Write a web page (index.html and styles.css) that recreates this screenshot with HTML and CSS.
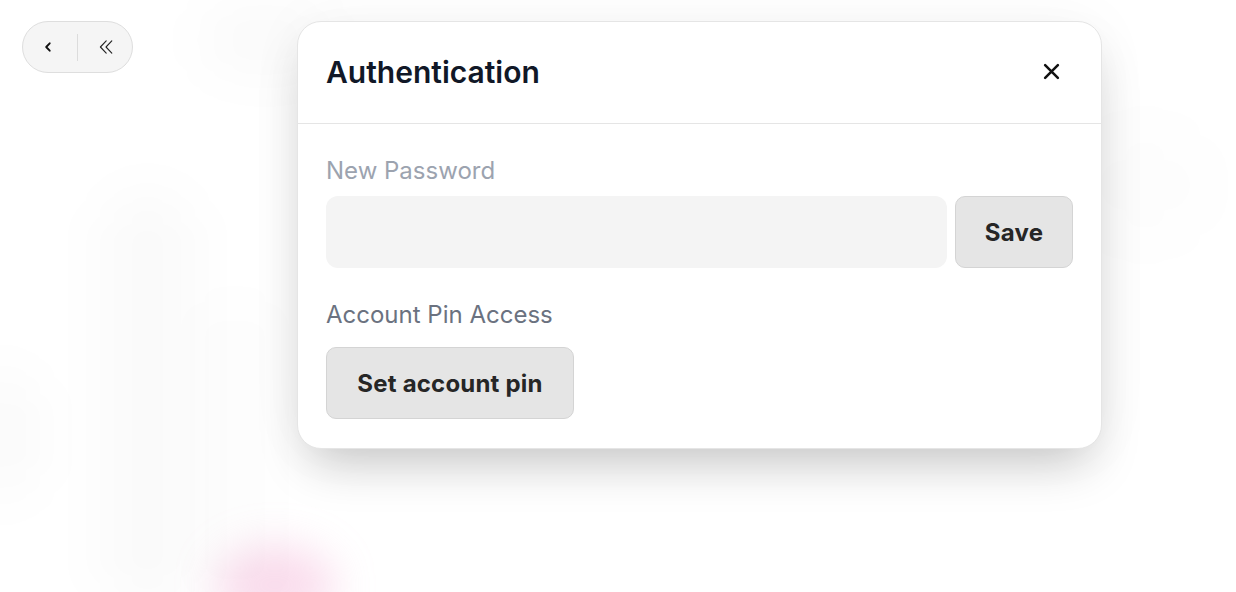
FILE: index.html
```html
<!DOCTYPE html>
<html lang="en">
<head>
<meta charset="utf-8">
<title>Authentication</title>
<link rel="stylesheet" href="styles.css">
</head>
<body>
<div class="backdrop" aria-hidden="true">
  <div class="blob blob-a"></div>
  <div class="blob blob-b"></div>
  <div class="blob blob-c"></div>
  <div class="blob blob-d"></div>
  <div class="blob blob-e"></div>
  <div class="blob blob-pink"></div>
</div>
<div class="page">
  <nav class="pill">
    <button class="pill-btn pill-left" aria-label="Back">
      <svg width="12" height="12" viewBox="0 0 12 12"><path d="M7.7 2.3 4.2 6l3.5 3.7" fill="none" stroke="#111" stroke-width="1.9" stroke-linecap="round" stroke-linejoin="round"/></svg>
    </button>
    <span class="pill-sep"></span>
    <button class="pill-btn pill-right" aria-label="Collapse">
      <svg width="16" height="16" viewBox="0 0 16 16"><path d="M8.2 1.8 2.4 8l5.8 6.2M13.8 1.8 8 8l5.8 6.2" fill="none" stroke="#222" stroke-width="1.1" stroke-linecap="round" stroke-linejoin="round"/></svg>
    </button>
  </nav>
  <section class="modal">
    <header class="modal-head">
      <h1 class="modal-title">Authentication</h1>
      <button class="close" aria-label="Close">
        <svg width="20" height="20" viewBox="0 0 20 20"><path d="M2.5 2.5l15 15M17.5 2.5l-15 15" stroke="#111" stroke-width="3" stroke-linecap="round"/></svg>
      </button>
    </header>
    <div class="modal-body">
      <label class="label label-light">New Password</label>
      <div class="row">
        <input class="field" type="password">
        <button class="btn">Save</button>
      </div>
      <div class="label label-dark">Account Pin Access</div>
      <div class="row">
        <button class="btn btn-wide">Set account pin</button>
      </div>
    </div>
  </section>
</div>
</body>
</html>
```

FILE: styles.css
```css
* { box-sizing: border-box; }
html, body { margin: 0; height: 100%; }
body {
  background: #ffffff;
  font-family: Inter, "Noto Sans", sans-serif;
  overflow: hidden;
  position: relative;
}
.backdrop { position: absolute; inset: 0; z-index: 0; overflow: hidden; }
.blob { position: absolute; border-radius: 60px; filter: blur(26px); }
.blob-a { left: 100px; top: 190px; width: 95px; height: 420px; background: rgba(0,0,0,0.02); }
.blob-b { left: 205px; top: 300px; width: 60px; height: 300px; background: rgba(0,0,0,0.012); }
.blob-c { left: -40px; top: 370px; width: 80px; height: 130px; background: rgba(0,0,0,0.018); }
.blob-d { left: 200px; top: 5px; width: 130px; height: 70px; background: rgba(0,0,0,0.02); }
.blob-e { left: 1090px; top: 130px; width: 110px; height: 110px; background: rgba(0,0,0,0.012); filter: blur(36px); }
.blob-pink { left: 215px; top: 545px; width: 120px; height: 80px; border-radius: 50%; background: rgba(240,150,200,0.32); filter: blur(20px); }

.page {
  position: relative;
  z-index: 1;
  display: flex;
  align-items: flex-start;
  padding: 21px 22px;
}
.pill {
  display: flex;
  align-items: center;
  width: 111px;
  height: 52px;
  border: 1px solid #dedede;
  border-radius: 26px;
  background: #f5f5f5;
}
.pill-btn {
  width: 54px;
  height: 100%;
  border: 0;
  background: transparent;
  display: flex;
  align-items: center;
  justify-content: center;
  padding: 0;
}
.pill-left { padding-right: 5px; }
.pill-right { padding-left: 2px; }
.pill-sep { width: 1px; height: 27px; background: #dcdcdc; }

.modal {
  margin-left: 164px;
  width: 805px;
  background: #fff;
  border: 1px solid #e5e5e5;
  border-radius: 24px;
  box-shadow: 0 25px 50px -12px rgba(0,0,0,0.22), 0 0 60px rgba(0,0,0,0.04);
}
.modal-head {
  height: 102px;
  border-bottom: 1px solid #e5e5e5;
  display: flex;
  align-items: center;
  justify-content: space-between;
  padding: 0 30px 2px 28px;
}
.modal-title {
  margin: 0;
  font-size: 30px;
  font-weight: 600;
  color: #111827;
}
.close {
  border: 0;
  background: transparent;
  padding: 0;
  width: 40px;
  height: 40px;
  display: flex;
  align-items: center;
  justify-content: center;
}
.close svg { width: 17px; height: 17px; }
.modal-body {
  padding: 30px 28px 29px 28px;
  display: flex;
  flex-direction: column;
}
.label {
  font-size: 24px;
  line-height: 34px;
}
.label-light { color: #9ca3af; margin-bottom: 8px; }
.label-dark { color: #6b7280; margin-top: 30px; margin-bottom: 15px; }
.row { display: flex; gap: 8px; }
.field {
  flex: 1;
  height: 72px;
  border: 0;
  border-radius: 12px;
  background: #f4f4f4;
  outline: none;
}
.btn {
  height: 72px;
  width: 118px;
  border: 1px solid #d4d4d4;
  border-radius: 10px;
  background: #e5e5e5;
  font-family: Inter, "Noto Sans", sans-serif;
  font-size: 24px;
  font-weight: 700;
  color: #262626;
  letter-spacing: 0.2px;
}
.btn-wide { width: 248px; }
```
